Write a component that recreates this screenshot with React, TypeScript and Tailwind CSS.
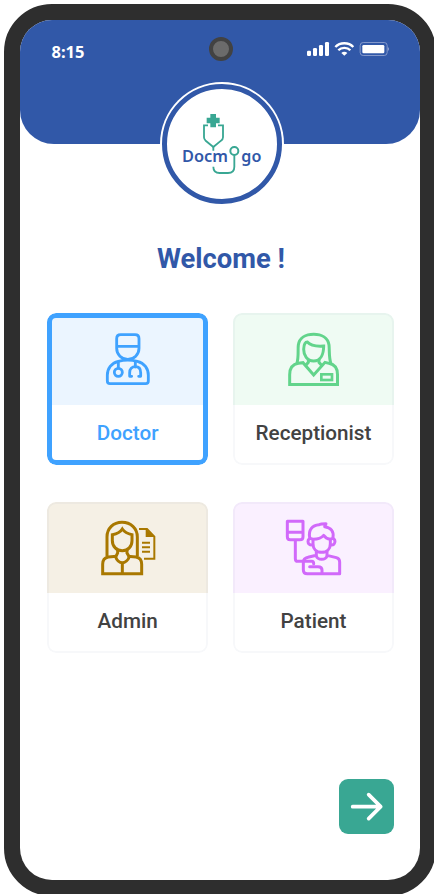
import type { ReactNode } from "react";

function StatusBar() {
  return (
    <div className="flex h-[58px] items-center">
      <span className="ml-[31.500px] mt-[6px] w-[157.500px] font-['Noto_Sans',sans-serif] text-[16.500px] font-bold leading-none text-white">8:15</span>
      <div className="h-6 w-6 rounded-full border-4 border-[#424242] bg-[#6b6b6b]" />
      {/* signal, wifi and battery */}
      <svg className="ml-[74px]" width="82" height="14" viewBox="0 0 246 42" fill="#fff">
        <rect x="0" y="26" width="12" height="16" rx="4" />
        <rect x="18" y="18" width="12" height="24" rx="4" />
        <rect x="36" y="9" width="12" height="33" rx="4" />
        <rect x="54" y="0" width="12" height="42" rx="4" />
        <g fill="none" stroke="#fff" strokeWidth="7">
          <path d="M85 15C99 0 125 0 139 15" />
          <path d="M94 25C103 15 121 15 130 25" />
        </g>
        <path d="M103 33C108 28 116 28 121 33L112 41Z" />
        <rect x="159.500" y="1.500" width="81" height="39" rx="9" fill="none" stroke="#8398cb" strokeWidth="3" />
        <rect x="166" y="9" width="66" height="25" rx="4" />
        <path d="M242 15C248 17 248 25 242 27Z" fill="#8398cb" />
      </svg>
    </div>
  );
}

function Logo() {
  return (
    <div className="h-[124px] w-[124px] rounded-full bg-white p-0.5">
      <div className="h-[120px] w-[120px] rounded-full border-[5px] border-[#3158a8] bg-white">
        <svg width="110" height="110" viewBox="36 42 330 330">
          <g fill="none" stroke="#39a793" strokeWidth="5.500">
            <path d="M159 151H147V187Q147 193 152 197L175 216L198 197Q204 193 204 187V151H189" />
            <path d="M175 214V227" />
            <circle cx="238" cy="228" r="12" strokeWidth="6" />
            <path d="M238 241V275Q238 294 219 294H194Q175 294 175 275" />
          </g>
          <path d="M166 117H183V128H194V145H183V157H166V145H155V128H166Z" fill="#39a793" />
          <g fill="#3158a8" fontFamily="'Noto Sans', sans-serif" fontSize="48" fontWeight="600">
            <text x="81" y="262" textLength="138" lengthAdjust="spacingAndGlyphs">Docm</text>
            <text x="259" y="262" textLength="60" lengthAdjust="spacingAndGlyphs">go</text>
          </g>
        </svg>
      </div>
    </div>
  );
}

function DoctorIcon() {
  return (
    <svg width="60" height="60" viewBox="174 87 180 180" fill="none" stroke="#3fa2ff" strokeWidth="8.500" strokeLinecap="round" strokeLinejoin="round">
      <path d="M230 139V116Q230 104 242 104H285Q297 104 297 116V139V145C297 164 282 178 263.500 178S230 164 230 145ZM230 139H297" />
      <path d="M235 184C214 189 202 206 202 226V243Q202 251 210 251H317Q325 251 325 243V226C325 206 313 189 292 184Q263 177 235 184Z" />
      <path d="M235 186V204M286 186V201" />
      <circle cx="235" cy="217" r="12" />
      <path d="M275 229H269V218C269 207 276 200 286 200S302 207 302 218V229H296" />
    </svg>
  );
}

function ReceptionistIcon() {
  return (
    <svg width="60" height="60" viewBox="174 72 180 180" fill="none" stroke="#62d48b" strokeWidth="9">
      <path d="M194 238.500H337.500V209C337.500 190 328 178 312 175L300 172L266 210L234 173L220 175C203 178 194 191 194 209Z" />
      <path d="M215 178C222 155 218 137 220 120C223 99 242 88 266 88S309 99 312 120C314 139 311 155 318 177" />
      <path d="M236 133Q237 111 247 111C255 120 270 125 296 123C296 147 287 168 266 168C246 168 236 151 236 133Z" />
      <path d="M250 164V172L241 182M282 164V172L291 182" />
      <rect x="289" y="208" width="32" height="17" strokeWidth="8" />
    </svg>
  );
}

function AdminIcon() {
  return (
    <svg width="60" height="60" viewBox="174 66 180 180" fill="none" stroke="#a97800" strokeWidth="9">
      <path d="M230 184L205 186C193 188 188 194 188 208V236H305V208C305 193 299 188 288 186L263 184" />
      <path d="M201 184V126C201 100 220 82 246 82S292 100 292 126V184" />
      <path d="M217 119Q239 115 247 102Q256 115 276 119V137C276 155 264 167 247 167S217 155 217 137Z" />
      <path d="M233 165V174L227 186C231 197 237 203 247 203S263 197 268 186L261 174V165M247 203V235" />
      <g strokeWidth="6">
        <path d="M297 102H321L343 125V191H312" />
        <path d="M306 143H330M306 157H330M306 170H330" />
      </g>
      <path d="M317 101L344 126H317Z" fill="#a97800" stroke="none" />
    </svg>
  );
}

function PatientIcon() {
  return (
    <svg width="60" height="60" viewBox="174 66 180 180" fill="none" stroke="#d169fa" strokeWidth="9" strokeLinecap="round" strokeLinejoin="round">
      <path d="M187 79H234V125Q234 134 225 134H196Q187 134 187 125ZM187 112H234M211 137V191Q211 199 219 199H260Q266 199 266 206" />
      <path d="M254 127C250 105 262 90 282 89Q287 86 303 86L299 95C318 98 327 109 324 127" />
      <path d="M264 133Q287 132 296 121Q302 131 316 133V146C316 161 306 172 290 172S264 161 264 146Z" />
      <path d="M262 132C245 124 244 153 263 150M318 132C333 124 335 153 317 150" />
      <path d="M274 170V181L249 187Q235 190 235 203V224Q235 236 247 236H344V201Q344 191 334 188L306 181V170M274 181C275 197 305 197 306 181" />
      <path d="M254 215H279Q291 215 291 225V235" />
    </svg>
  );
}

type RoleProps = { label: string; tint: string; icon: ReactNode; selected?: boolean };

function RoleCard({ label, tint, icon, selected }: RoleProps) {
  return (
    <button
      className={`relative flex h-[151.500px] flex-col overflow-hidden rounded-[9px] bg-white font-[Roboto,sans-serif] text-[20.700px] font-medium ${selected ? "text-[#3fa2ff]" : "text-[#424242]"}`}
    >
      <span className={`flex h-[91.600px] w-full shrink-0 items-center justify-center ${tint}`}>{icon}</span>
      <span className="flex w-full flex-1 items-center justify-center pb-[2.500px]">{label}</span>
      {/* outline drawn over the tinted header */}
      <span className={`absolute inset-0 rounded-[9px] ${selected ? "border-[5px] border-[#3fa2ff]" : "border-2 border-[#315888]/[0.04]"}`} />
    </button>
  );
}

export default function App() {
  return (
    <main className="h-[894px] w-[434px] overflow-hidden bg-white pl-1 pt-1">
      <div className="h-[892px] w-[432px] rounded-[48px] border-[16px] border-[#2e2e2e] bg-[#2e2e2e]">
        <div className="flex h-[860px] flex-col overflow-hidden rounded-[32px] bg-white">
          <header className="h-[124px] shrink-0 rounded-b-[34px] bg-[#3158a8]">
            <StatusBar />
            <div className="ml-[140px] mt-[3.500px]">
              <Logo />
            </div>
          </header>
          <h1 className="mt-[97px] pl-0.5 text-center font-[Roboto,sans-serif] text-[27.400px] font-bold leading-9 text-[#3158a8]">Welcome !</h1>
          <section className="ml-[27.400px] mt-[36.300px] grid w-[346.300px] grid-cols-2 gap-x-[25.400px] gap-y-[36.800px]">
            <RoleCard label="Doctor" tint="bg-[#ebf5ff]" icon={<DoctorIcon />} selected />
            <RoleCard label="Receptionist" tint="bg-[#effbf3]" icon={<ReceptionistIcon />} />
            <RoleCard label="Admin" tint="bg-[#f5f0e5]" icon={<AdminIcon />} />
            <RoleCard label="Patient" tint="bg-[#faf0ff]" icon={<PatientIcon />} />
          </section>
          <button aria-label="Continue" className="ml-auto mr-[26px] mt-auto mb-[46px] flex h-[55px] w-[55px] items-center justify-center rounded-[9px] bg-[#39a793]">
            <svg width="55" height="55" viewBox="0 0 165 165" fill="none" stroke="#fff" strokeWidth="11" strokeLinecap="round" strokeLinejoin="round">
              <path d="M41 83H125M89 47L125 83L89 119" />
            </svg>
          </button>
        </div>
      </div>
    </main>
  );
}
